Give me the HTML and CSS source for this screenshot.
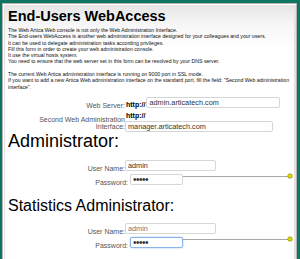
FILE: index.html
```html
<!DOCTYPE html>
<html>
<head>
<meta charset="utf-8">
<link rel="stylesheet" href="styles.css">
</head>
<body>
<div class="panel">
  <h1 class="title">End-Users WebAccess</h1>
  <div class="intro">
    The Web Artica Web console is not only the Web Administration Interface.<br>
    The End-users WebAccess is another web administration interface designed for your colleagues and your users.<br>
    It can be used to delegate administration tasks according privileges.<br>
    Fill this form in order to create your web administration console.<br>
    It use the virtual hosts system.<br>
    You need to ensure that the web server set in this form can be resolved by your DNS server.<br>
    <br>
    The current Web Artica administration interface is running on 9000 port in SSL mode.<br>
    If you want to add a new Artica Web administration interface on the standard port, fill the field: "Second Web administration<br>
    interface".
  </div>

  <div class="form">
    <div class="row row-web">
      <div class="label">Web Server:</div>
      <div class="field"><span class="proto">http://</span><input class="input in-web" type="text" value="admin.articatech.com"></div>
    </div>
    <div class="row row-second">
      <div class="label">Second Web Administration<br>Interface:</div>
      <div class="field stack"><span class="proto">http://</span><input class="input in-second" type="text" value="manager.articatech.com"></div>
    </div>
  </div>

  <h2 class="section admin">Administrator:</h2>
  <div class="form cred">
    <div class="row row-user">
      <div class="label">User Name:</div>
      <div class="field"><input class="input in-user" type="text" value="admin"></div>
    </div>
    <div class="row row-pass">
      <div class="label">Password:</div>
      <div class="field meter-field"><input class="input in-pass" type="password" value="admin"><span class="meter"></span></div>
    </div>
  </div>

  <h2 class="section stats">Statistics Administrator:</h2>
  <div class="form cred cred2">
    <div class="row row-user">
      <div class="label">User Name:</div>
      <div class="field"><input class="input in-user light" type="text" value="admin"></div>
    </div>
    <div class="row row-pass">
      <div class="label">Password:</div>
      <div class="field meter-field"><input class="input in-pass focus" type="password" value="admin"><span class="meter"></span></div>
    </div>
  </div>
</div>
</body>
</html>
```

FILE: styles.css
```css
html, body {
  margin: 0;
  padding: 0;
  height: 259px;
  overflow: hidden;
  background: #0f7560;
}
body {
  font-family: "Liberation Sans", Arial, sans-serif;
  color: #000;
}
.panel {
  margin: 3px 3px 0 2px;
  height: 300px;
  border: 1px solid #b4b4b4;
  border-bottom: none;
  box-shadow: inset 1px 1px 0 #fff, inset 2px 0 0 #e2e2e2, inset -2px 0 0 #e2e2e2;
  background: linear-gradient(#e4e4e4 0, #f6f6f6 20px, #ffffff 45px);
  padding: 0 2px 0 5px;
}
.title {
  margin: 4px 0 0 0;
  font-size: 14.5px;
  line-height: 16px;
  font-weight: bold;
}
.intro {
  margin-top: 3px;
  height: 63px;
  font-size: 5.2px;
  line-height: 6.3px;
  color: #111;
  white-space: nowrap;
}
.form {
  display: flex;
  flex-direction: column;
}
.row {
  display: flex;
  align-items: flex-end;
}
.label {
  width: 117px;
  flex: none;
  text-align: right;
  font-size: 7px;
  line-height: 8px;
  color: #555;
  margin-bottom: -2px;
}
.field {
  display: flex;
  align-items: center;
}
.proto {
  font-size: 7px;
  font-weight: bold;
  line-height: 8px;
}
.input {
  box-sizing: border-box;
  height: 11px;
  margin: 0;
  padding: 0 2px;
  border: 1px solid #d6d6d6;
  border-radius: 2px;
  background: #fff;
  font-family: "Liberation Sans", Arial, sans-serif;
  font-size: 7.3px;
  color: #333;
  outline: none;
}
/* Web server row */
.row-web {
  margin-top: 7px;
}
.row-web .field {
  align-items: flex-end;
}
.row-web .proto {
  margin-left: 1px;
  margin-right: 1px;
  margin-bottom: -1px;
}
.in-web { width: 134px; }
/* Second web admin row */
.row-second {
  margin-top: 4px;
  align-items: center;
}
.row-second .label {
  line-height: 7px;
  margin-bottom: 0;
  margin-top: 1px;
}
.stack {
  flex-direction: column;
  align-items: flex-start;
}
.stack .proto { margin-left: 1px; }
.in-second { width: 148px; margin-top: 1px; }
/* headings */
.section {
  margin: 0;
  font-weight: normal;
  color: #000;
}
.admin {
  font-size: 18px;
  line-height: 18px;
}
.stats {
  font-size: 16px;
  line-height: 18px;
  margin-top: 12px;
}
/* credentials */
.cred .row-user { margin-top: 10px; }
.cred .row-pass { margin-top: 3px; }
.cred2 .row-user { margin-top: 8px; }
.in-user { width: 91px; }
.in-pass {
  width: 53px;
  font-size: 10px;
  letter-spacing: -0.5px;
}
.cred .row-pass .label { width: 120px; }
.cred .row-pass .field { margin-left: 2px; }
.meter-field {
  flex: 1;
  align-items: flex-start;
}
.meter {
  flex: 1;
  height: 1px;
  margin-top: 2px;
  margin-right: 4px;
  background: #a8a8a8;
  position: relative;
}
.meter::after {
  content: "";
  position: absolute;
  right: -2px;
  top: -2px;
  width: 4px;
  height: 4px;
  border-radius: 50%;
  background: #d8d800;
  box-shadow: 0 0 0 0.5px #8a8a00;
}
.light { color: #777; }
.focus {
  border-color: #8ab4e8;
  box-shadow: 0 0 2px #9cc2f0;
}
```
